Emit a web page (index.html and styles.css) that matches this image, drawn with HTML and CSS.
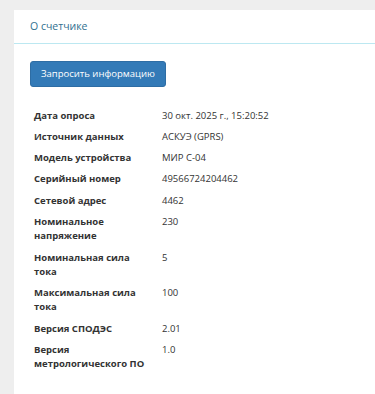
FILE: index.html
```html
<!DOCTYPE html>
<html lang="ru">
<head>
    <meta charset="UTF-8">
    <meta name="viewport" content="width=device-width, initial-scale=1.0">
    <title>О счетчике</title>
    <link rel="stylesheet" href="styles.css">
</head>
<body>
    <div class="panel">
        <div class="panel-heading">О счетчике</div>
        <div class="panel-body">
            <button class="btn-primary">Запросить информацию</button>
            <table class="info-table">
                <tr><th>Дата опроса</th><td>30 окт. 2025 г., 15:20:52</td></tr>
                <tr><th>Источник данных</th><td>АСКУЭ (GPRS)</td></tr>
                <tr><th>Модель устройства</th><td>МИР С-04</td></tr>
                <tr><th>Серийный номер</th><td>49566724204462</td></tr>
                <tr><th>Сетевой адрес</th><td>4462</td></tr>
                <tr><th>Номинальное напряжение</th><td>230</td></tr>
                <tr><th>Номинальная сила тока</th><td>5</td></tr>
                <tr><th>Максимальная сила тока</th><td>100</td></tr>
                <tr><th>Версия СПОДЭС</th><td>2.01</td></tr>
                <tr><th>Версия метрологического ПО</th><td>1.0</td></tr>
            </table>
        </div>
    </div>
</body>
</html>
```

FILE: styles.css
```css
body {
    margin: 0;
    padding: 10px 0 0 14px;
    background: #eeeeee;
    font-family: "Open Sans", Arial, sans-serif;
    color: #333;
    overflow: hidden;
}
.panel {
    background: #fff;
    min-height: 400px;
}
.panel-heading {
    padding: 8px 16px;
    font-size: 10.5px;
    line-height: 17px;
    color: #31708f;
    border-bottom: 1px solid #bce8f1;
}
.panel-body {
    padding: 17px 16px;
}
.btn-primary {
    display: block;
    font-family: inherit;
    font-size: 9.5px;
    line-height: 14px;
    padding: 5px 10px;
    color: #fff;
    background: #337ab7;
    border: 1px solid #2e6da4;
    border-radius: 3px;
    cursor: pointer;
}
.info-table {
    margin-top: 18px;
    border-collapse: collapse;
    font-size: 9.5px;
    line-height: 14.3px;
}
.info-table th,
.info-table td {
    padding: 3.5px 4px;
    text-align: left;
    vertical-align: top;
}
.info-table th {
    width: 120px;
    font-weight: bold;
}
```
